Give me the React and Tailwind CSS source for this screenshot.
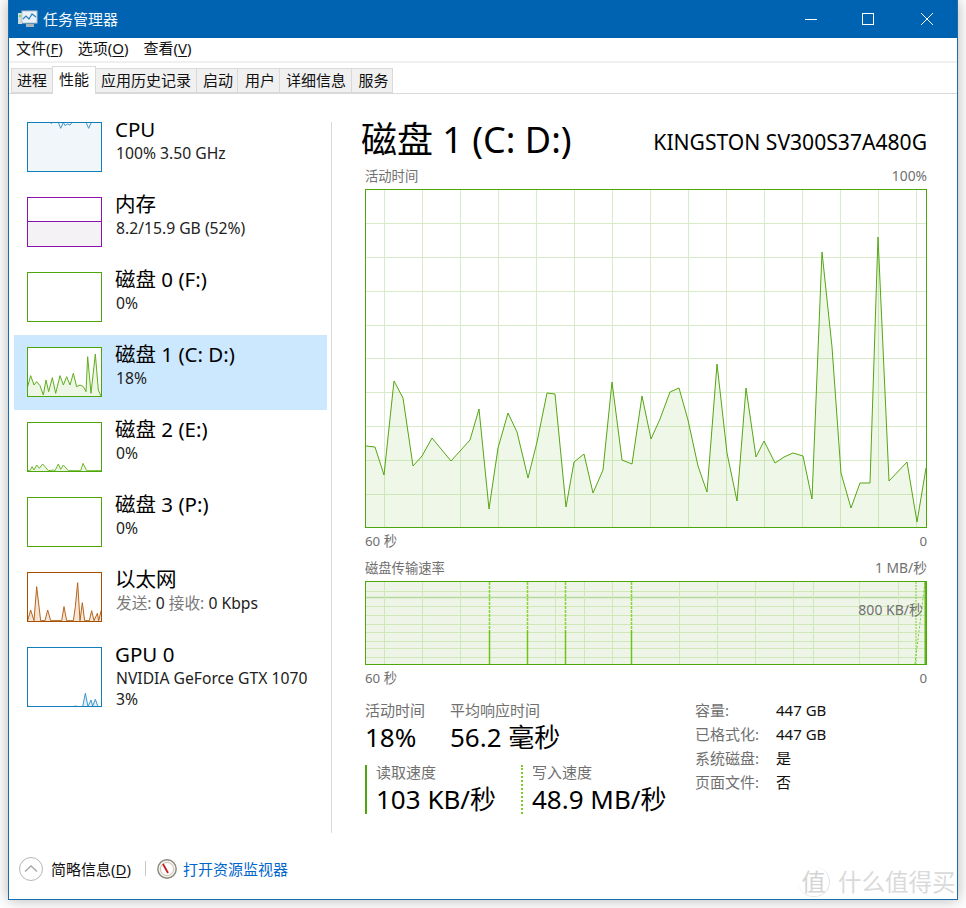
import React from "react";

const MAIN = [[366,446],[375,447],[384,475],[394,381],[403,398],[413,466],[422,456],[432,438],[451,461],[470,440],[479,409],[489,509],[498,448],[508,413],[517,432],[528,478],[537,442],[547,393],[555,394],[566,507],[574,462],[584,454],[593,493],[603,470],[612,382],[622,460],[632,464],[642,396],[651,439],[660,419],[670,392],[679,388],[688,420],[698,466],[707,492],[717,364],[727,453],[737,501],[746,388],[756,457],[764,441],[775,463],[784,457],[793,453],[803,456],[812,499],[822,252],[832,347],[841,473],[851,508],[860,483],[870,483],[878,237],[889,481],[907,462],[917,522],[926,468]];
const pts = (a) => a.map((p) => p.join(",")).join(" ");

function Thumb({ color, h = 50, bg = "bg-white", line, fill, lineColor, children }) {
  const H = h - 2;
  return (
    <div className={`w-[75px] shrink-0 border ${color} ${bg} ${h === 60 ? "h-[60px]" : "h-[50px]"}`}>
      <svg width="73" height={H} viewBox={`0 0 73 ${H}`} className="block">
        {line && <polygon points={`0,${H} ${pts(line)} 73,${H}`} fill={fill} />}
        {line && <polyline points={pts(line)} fill="none" stroke={lineColor} strokeWidth="1" />}
        {children}
      </svg>
    </div>
  );
}

function Row({ thumb, name, sub, sub2, selected }) {
  return (
    <div className={`flex h-[75px] w-[313px] pl-[13px] pt-[12px] ${selected ? "bg-[#cce8ff]" : ""}`}>
      {thumb}
      <div className="ml-[13px] -mt-[6px] flex flex-col">
        <div className="text-[20.5px] leading-[26px] text-black whitespace-pre">{name}</div>
        <div className="ml-px text-[15.7px] leading-[22px] text-[#222] whitespace-pre">{sub}</div>
        {sub2 && <div className="ml-px text-[15.7px] leading-[20px] text-[#222]">{sub2}</div>}
      </div>
    </div>
  );
}

const U = ({ children }) => <span className="underline underline-offset-2">{children}</span>;

function Tab({ w, active, children }) {
  return active ? (
    <div className="w-[44px] h-[28px] -mb-px -mr-px z-10 bg-white border-x border-t border-[#d9d9d9] text-center text-[15px] leading-[24px] text-[#111]">{children}</div>
  ) : (
    <div className={`${w} h-[25px] -mr-px bg-[#f0f0f0] border border-[#d9d9d9] text-center text-[15px] leading-[22px] text-[#111]`}>{children}</div>
  );
}

const Label = ({ children, className = "text-[13.3px]" }) => <div className={`leading-[18px] text-[#707070] whitespace-pre ${className}`}>{children}</div>;
const Value = ({ children, className = "" }) => <div className={`text-[26px] leading-[32px] text-black whitespace-pre ${className}`}>{children}</div>;

export default function App() {
  const mapD = (a, ox, oy) => a.map(([x, y]) => [x / 3 + ox, y / 3 + oy]);
  const disk1 = mapD([[53,830],[62,797],[72,825],[80,815],[90,827],[100,855],[108,810],[116,845],[127,803],[137,850],[150,797],[160,825],[170,800],[180,825],[190,790],[200,830],[210,825],[220,830],[228,845],[233,740],[243,850],[256,732],[265,840],[273,858]], 10 - 28, 110 - 348);
  const disk2 = mapD([[53,182],[60,182],[66,170],[72,180],[80,165],[88,175],[98,162],[105,170],[115,182],[130,180],[135,182],[145,162],[152,178],[160,165],[175,182],[212,182],[219,160],[230,182],[273,182]], 10 - 28, 410 - 423);
  const net = mapD([[53,632],[62,600],[72,632],[80,530],[92,632],[105,632],[113,600],[122,632],[155,632],[162,590],[170,632],[190,632],[196,590],[203,518],[210,632],[217,578],[224,632],[238,632],[245,602],[252,632],[262,610],[266,632],[274,600]], 10 - 28, 410 - 573);
  const gpu = mapD([[53,888],[60,890],[190,890],[195,888],[205,890],[218,890],[226,850],[234,890],[243,870],[248,888],[256,868],[264,890],[273,890]], 10 - 28, 410 - 648);
  const cpu = mapD([[53,37],[120,37],[124,41],[128,37],[145,37],[152,55],[160,37],[165,47],[172,42],[180,45],[187,37],[228,37],[236,55],[244,37],[273,37]], 10 - 28, 110 - 123);

  const hMain = [223, 257, 291, 325, 358, 392, 426, 460, 494];
  const vMain = [384, 422, 460, 498, 536, 574, 612, 650, 688, 726, 764, 802, 840, 878, 916];
  const hRate = [591, 606, 615, 624, 632, 641, 648, 657];
  const vRate = [384, 422, 460, 555, 584, 612, 679, 717, 755, 793, 813, 859, 898];

  return (
    <div className="w-[966px] h-[908px] bg-white overflow-hidden relative [font-family:'Noto_Sans','Noto_Sans_CJK_SC',sans-serif]">
      <div className="ml-[8px] w-[950px] h-[900px] border border-t-0 border-[#1a6cb0] bg-white shadow-[0_0_14px_rgba(0,0,0,0.3)] flex flex-col">
        {/* Title bar */}
        <div className="h-[38px] shrink-0 bg-[#0063b1] flex items-center pl-[9px] text-white">
          <svg width="20" height="18" viewBox="0 0 20 18" className="shrink-0">
            <rect x="0" y="3" width="4" height="11" fill="#cfd8dc" />
            <rect x="1" y="5" width="2" height="2" fill="#7ed957" />
            <rect x="4" y="1" width="15" height="12" fill="#eaf2f8" stroke="#b8c4cc" />
            <polyline points="5,9 8,6 11,9 14,4 18,7" fill="none" stroke="#2f7fbf" strokeWidth="1.2" />
            <rect x="8" y="14" width="8" height="3" fill="#aab4bb" />
          </svg>
          <span className="ml-[5px] text-[15px] text-[#f4f8fb]">任务管理器</span>
          <div className="ml-auto flex items-center">
            <svg width="14" height="14" viewBox="0 0 14 14" className="mr-[43px]"><line x1="1" y1="7.5" x2="13" y2="7.5" stroke="#fff" /></svg>
            <svg width="14" height="14" viewBox="0 0 14 14" className="mr-[45px]"><rect x="1.5" y="1.5" width="11" height="11" fill="none" stroke="#fff" /></svg>
            <svg width="14" height="14" viewBox="0 0 14 14" className="mr-[23px]"><path d="M1 1 L13 13 M13 1 L1 13" fill="none" stroke="#fff" /></svg>
          </div>
        </div>
        {/* Menu */}
        <div className="h-[25px] shrink-0 flex items-center gap-[15px] pl-[7px] pb-[2px] border-b-2 border-[#f0f0f0] text-[15px] text-[#111]">
          <span>文件(<U>F</U>)</span><span>选项(<U>O</U>)</span><span>查看(<U>V</U>)</span>
        </div>
        {/* Tabs */}
        <div className="h-[31px] shrink-0 flex items-end pl-[2px] border-b border-[#d9d9d9]">
          <Tab w="w-[42px]">进程</Tab>
          <Tab active>性能</Tab>
          <Tab w="w-[102px]">应用历史记录</Tab>
          <Tab w="w-[42px] pl-[2px]">启动</Tab>
          <Tab w="w-[43px] pl-[3px]">用户</Tab>
          <Tab w="w-[73px] pl-[1px]">详细信息</Tab>
          <Tab w="w-[42px] pl-[3px]">服务</Tab>
        </div>
        {/* Body */}
        <div className="flex-1 flex pt-[16px] pl-[5px]">
          <div className="w-[313px] shrink-0 flex flex-col">
            <Row name="CPU" sub="100% 3.50 GHz" thumb={<Thumb color="border-[#117dbb]" bg="bg-[#f1f6fa]" line={cpu} lineColor="#4a9bcc" fill="#f1f6fa" />} />
            <Row name="内存" sub="8.2/15.9 GB (52%)" thumb={
              <div className="w-[75px] h-[50px] shrink-0 border border-[#8b12ae] flex flex-col">
                <div className="h-[24px] bg-white border-b border-[#8b12ae]" />
                <div className="flex-1 bg-[#f4f2f4]" />
              </div>} />
            <Row name="磁盘 0 (F:)" sub="0%" thumb={<Thumb color="border-[#4da60c]" />} />
            <Row selected name="磁盘 1 (C: D:)" sub="18%" thumb={<Thumb color="border-[#4da60c]" line={disk1} lineColor="#5fae1c" fill="#eef6e6" />} />
            <Row name="磁盘 2 (E:)" sub="0%" thumb={<Thumb color="border-[#4da60c]" line={disk2} lineColor="#6cb82c" fill="#eef6e6" />} />
            <Row name="磁盘 3 (P:)" sub="0%" thumb={<Thumb color="border-[#4da60c]" />} />
            <Row name="以太网" sub={<><span className="text-[#7a7a7a]">发送:</span> 0 <span className="text-[#7a7a7a]">接收:</span> 0 Kbps</>} thumb={<Thumb color="border-[#a74f01]" line={net} lineColor="#b5651d" fill="#f6e6d8" />} />
            <Row name="GPU 0" sub="NVIDIA GeForce GTX 1070" sub2="3%" thumb={<Thumb h={60} color="border-[#117dbb]" line={gpu} lineColor="#3f97cc" fill="#e4f0f8" />} />
          </div>
          {/* Right panel */}
          <div className="ml-[4px] mt-[12px] h-[711px] w-[596px] border-l border-[#d9d9d9] pl-[33px] flex flex-col">
            <div className="h-[45px] w-[562px] flex items-start justify-between">
              <div className="-ml-[4px] -mt-[6px] text-[36px] leading-[48px] text-black whitespace-pre">磁盘 1 (C: D:)</div>
              <div className="mt-[6px] text-[21.1px] leading-[28px] text-black whitespace-pre">KINGSTON SV300S37A480G</div>
            </div>
            <div className="h-[22px] w-[562px] flex justify-between"><Label>活动时间</Label><Label className="text-[13.8px]">100%</Label></div>
            <div className="w-[562px] h-[339px] border border-[#4da60c]">
              <svg width="560" height="337" viewBox="366 190 560 337" className="block">
                {hMain.map((y) => <line key={y} x1="366" x2="926" y1={y + 0.5} y2={y + 0.5} stroke="#d9ecc9" />)}
                {vMain.map((x) => <line key={x} y1="190" y2="527" x1={x + 0.5} x2={x + 0.5} stroke="#d9ecc9" />)}
                <polygon points={`366,527 ${pts(MAIN)} 926,527`} fill="#5fae1c" fillOpacity="0.1" />
                <polyline points={pts(MAIN)} fill="none" stroke="#55a613" strokeWidth="1" />
              </svg>
            </div>
            <div className="h-[30px] w-[562px] flex justify-between pt-[4px]"><Label>60 秒</Label><Label>0</Label></div>
            <div className="h-[23px] w-[562px] flex justify-between pt-px"><Label>磁盘传输速率</Label><Label className="text-[13.8px]">1 MB/秒</Label></div>
            <div className="relative w-[562px] h-[84px] border border-[#4da60c] bg-[#eef5e8]">
              <svg width="560" height="82" viewBox="366 582 560 82" className="block">
                {hRate.map((y) => <line key={y} x1="366" x2="926" y1={y + 0.5} y2={y + 0.5} stroke="#cfe8b8" />)}
                <line x1="366" x2="926" y1="597.5" y2="597.5" stroke="#b5d99a" strokeWidth="1.5" />
                {vRate.map((x) => <line key={x} y1="582" y2="664" x1={x + 0.5} x2={x + 0.5} stroke="#cfe8b8" />)}
                {[489, 527, 565, 631].map((x) => (
                  <g key={x}>
                    <line x1={x + 0.5} x2={x + 0.5} y1="582" y2="630" stroke="#86d431" strokeWidth="1.5" strokeDasharray="3 1" />
                    <line x1={x + 0.5} x2={x + 0.5} y1="630" y2="664" stroke="#6cc417" strokeWidth="1.5" />
                  </g>
                ))}
                <polyline points="915,664 925,582" fill="none" stroke="#7ccf2a" strokeDasharray="2 2" />
                <line x1="916" x2="916" y1="582" y2="664" stroke="#7ccf2a" strokeDasharray="2 1" />
                <line x1="925.5" x2="925.5" y1="582" y2="664" stroke="#5fb515" strokeWidth="2" />
              </svg>
              <div className="absolute right-[3px] top-[19px] text-[14px] leading-[18px] text-[#707070] whitespace-pre">800 KB/秒</div>
            </div>
            <div className="h-[28px] w-[562px] flex justify-between pt-[4px]"><Label>60 秒</Label><Label>0</Label></div>
            {/* Stats */}
            <div className="w-[562px] mt-[8px] flex">
              <div className="w-[330px] flex flex-col">
                <div className="flex">
                  <div className="w-[85px]"><Label className="text-[15px]">活动时间</Label><Value className="mt-[2px]">18%</Value></div>
                  <div><Label className="text-[15px]">平均响应时间</Label><Value className="mt-[2px]">56.2 毫秒</Value></div>
                </div>
                <div className="flex mt-[12px]">
                  <div className="w-[156px] h-[49px] border-l-2 border-[#4da60c] pl-[9px]"><Label className="text-[15px] -mt-[2px]">读取速度</Label><Value className="mt-[2px]">103 KB/秒</Value></div>
                  <div className="h-[49px] border-l-2 border-dotted border-[#7ccf2a] pl-[9px]"><Label className="text-[15px] -mt-[2px]">写入速度</Label><Value className="mt-[2px]">48.9 MB/秒</Value></div>
                </div>
              </div>
              <div className="grid grid-cols-[81px_1fr] auto-rows-[24px] text-[15px] leading-[18px] text-[#111]">
                <Label className="text-[15px]">容量:</Label><div>447 GB</div>
                <Label className="text-[15px]">已格式化:</Label><div>447 GB</div>
                <Label className="text-[15px]">系统磁盘:</Label><div>是</div>
                <Label className="text-[15px]">页面文件:</Label><div>否</div>
              </div>
            </div>
          </div>
        </div>
        {/* Footer */}
        <div className="h-[66px] shrink-0 flex items-start pt-[24px] pl-[10px]">
          <svg width="24" height="24" viewBox="0 0 24 24" className="shrink-0">
            <circle cx="12" cy="12" r="11.5" fill="#fff" stroke="#b5b5b5" />
            <path d="M6 14.5 L12 9 L18 14.5" fill="none" stroke="#a8a8a8" strokeWidth="1.4" />
          </svg>
          <span className="ml-[8px] text-[15px] leading-[24px] text-[#111]">简略信息(<U>D</U>)</span>
          <div className="ml-[14px] mt-[4px] w-px h-[15px] bg-[#c8c8c8]" />
          <svg width="20" height="20" viewBox="0 0 20 20" className="ml-[11px] mt-[2px] shrink-0">
            <circle cx="10" cy="10" r="9.2" fill="#f3efe8" stroke="#8a8a80" strokeWidth="1.4" />
            <circle cx="10" cy="10" r="6.5" fill="#fff" stroke="#c9c4b8" />
            <line x1="6" y1="5" x2="11" y2="14" stroke="#c81e1e" strokeWidth="1.8" />
          </svg>
          <span className="ml-[6px] text-[15px] leading-[24px] text-[#0066cc]">打开资源监视器</span>
        </div>
      </div>
      {/* Watermark */}
      <div className="absolute left-[798px] top-[867px] flex items-center">
        <div className="w-[32px] h-[30px] rounded-full border-r border-b border-[#e4e4e4] flex items-center justify-center text-[24px] leading-none text-[#d4d4d4]">值</div>
        <span className="ml-[8px] text-[23.5px] leading-[30px] text-[#dadada]">什么值得买</span>
      </div>
    </div>
  );
}
